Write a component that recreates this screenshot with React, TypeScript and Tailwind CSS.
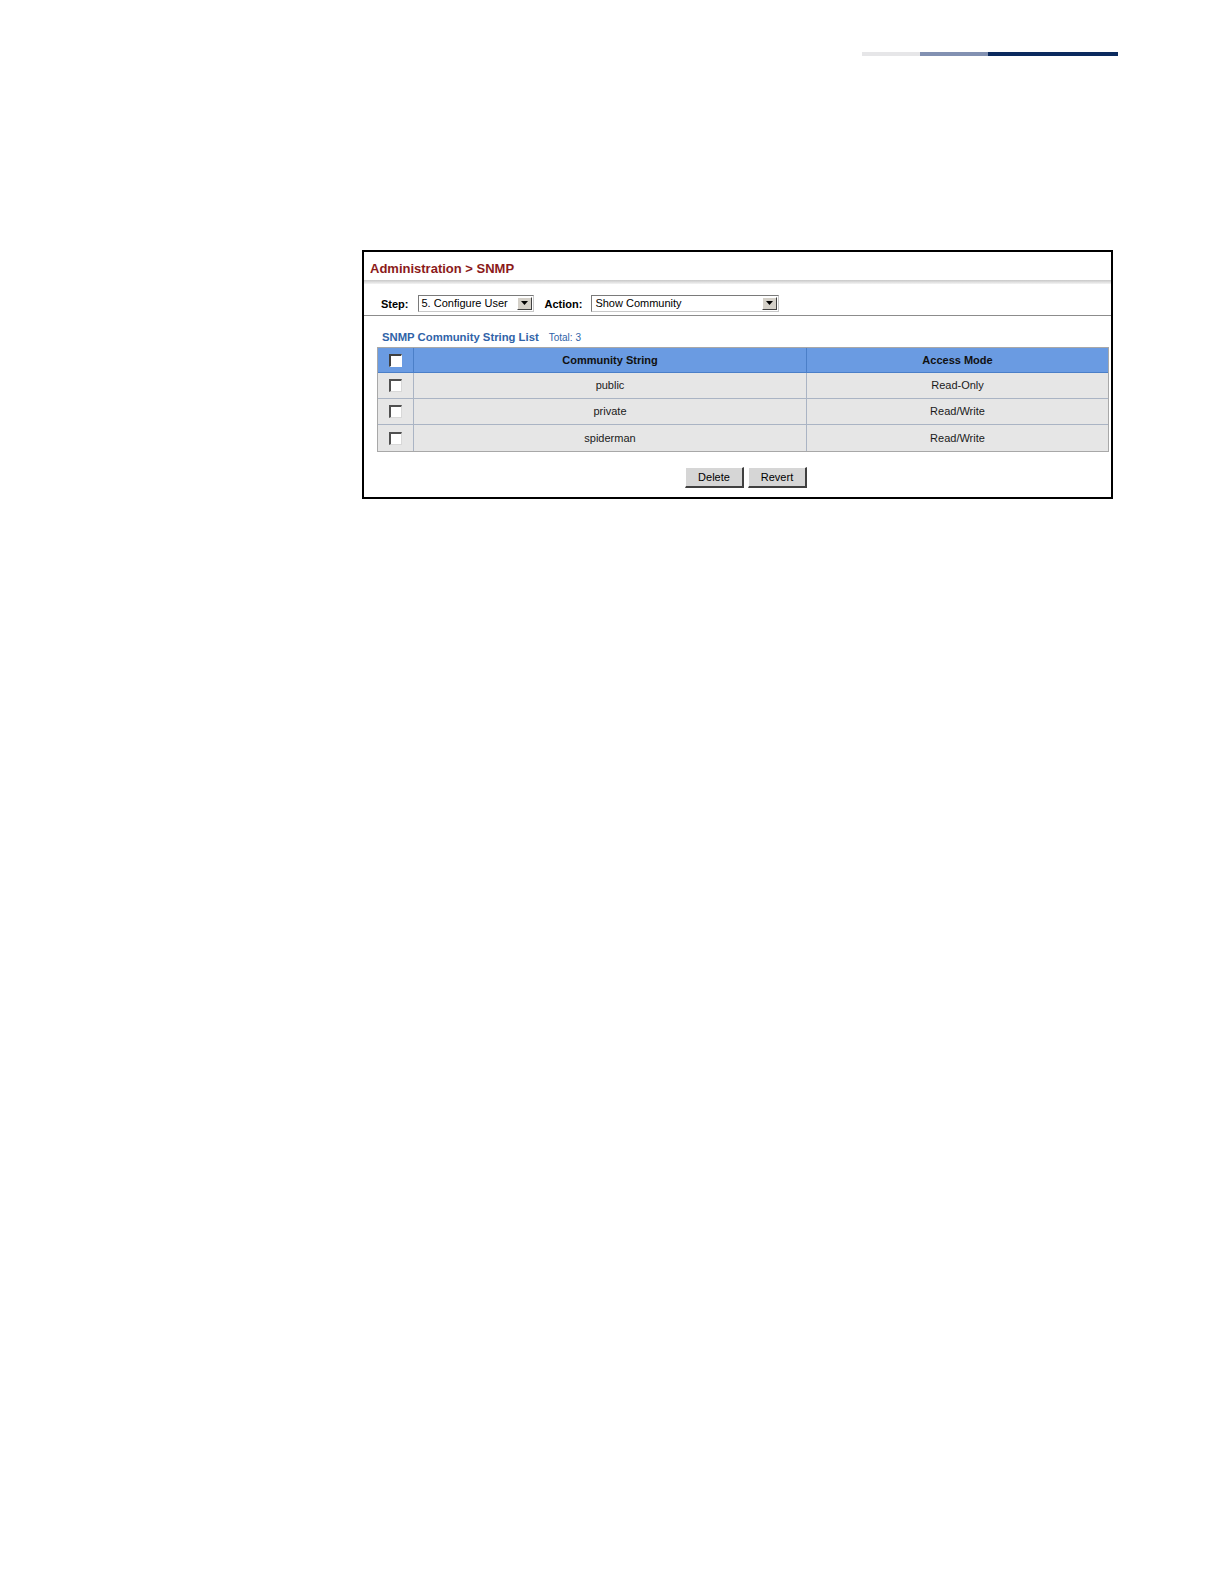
const SANS = "font-['Liberation_Sans',Arial,sans-serif]";

type Row = { name: string; mode: string };

const ROWS: Row[] = [
  { name: 'public', mode: 'Read-Only' },
  { name: 'private', mode: 'Read/Write' },
  { name: 'spiderman', mode: 'Read/Write' },
];

function Checkbox({ header = false }: { header?: boolean }) {
  return (
    <span
      className={
        'inline-block h-[13px] w-[13px] border-t-2 border-l-2 border-b border-r bg-white ' +
        (header
          ? 'border-t-[#404040] border-l-[#404040] border-b-white border-r-white'
          : 'border-t-[#505050] border-l-[#505050] border-b-[#d8d8d8] border-r-[#d8d8d8]')
      }
    />
  );
}

function Select({ value, width }: { value: string; width: string }) {
  return (
    <div
      className={`flex h-[17px] items-center border border-t-[#7a7a7a] border-l-[#7a7a7a] border-b-[#c8c8c8] border-r-[#c8c8c8] bg-white ${width}`}
    >
      <span className={`flex-1 truncate pl-[3px] text-[11px] leading-none text-black ${SANS}`}>
        {value}
      </span>
      <span className="mr-[1px] flex h-[13px] w-[15px] items-center justify-center border border-t-white border-l-white border-b-[#404040] border-r-[#404040] bg-[#d4d0c8]">
        <svg width="7" height="4" viewBox="0 0 7 4">
          <path d="M0 0h7L3.5 4z" fill="#000" />
        </svg>
      </span>
    </div>
  );
}

function Button({ label }: { label: string }) {
  return (
    <button
      type="button"
      className={`h-[21px] w-[59px] border border-t-white border-l-white border-b-2 border-r-2 border-b-[#404040] border-r-[#404040] bg-[#d6d6d6] text-[11px] text-black ${SANS}`}
    >
      {label}
    </button>
  );
}

export default function App() {
  return (
    <div className="relative h-[1584px] w-[1224px] bg-white">
      {/* page header rule */}
      <div className="flex pt-[52px] pl-[862px]">
        <div className="h-[4px] w-[58px] bg-[#e6e6e8]" />
        <div className="h-[4px] w-[68px] bg-[#8291b2]" />
        <div className="h-[4px] w-[130px] bg-[#0b2a5e]" />
      </div>

      <div className="ml-[362px] mt-[194px] h-[249px] w-[751px] border-2 border-black">
        <div className={`pl-[6px] pt-[9px] text-[13px] font-bold leading-[16px] text-[#8b1a1a] ${SANS}`}>
          Administration &gt; SNMP
        </div>
        <div className="mt-[3px] h-[4px] bg-gradient-to-b from-[#c8c8c8] to-[#f4f4f4]" />

        <div className="flex h-[32px] items-center border-b border-[#8c8c8c] pl-[17px] pt-[7px]">
          <span className={`pt-[3px] text-[11px] font-bold text-black ${SANS}`}>Step:</span>
          <div className="ml-[9px]">
            <Select value="5. Configure User" width="w-[116px]" />
          </div>
          <span className={`ml-[11px] pt-[3px] text-[11px] font-bold text-black ${SANS}`}>Action:</span>
          <div className="ml-[9px]">
            <Select value="Show Community" width="w-[188px]" />
          </div>
        </div>

        <div className="flex items-baseline gap-[10px] pl-[18px] pt-[14px] leading-[14px]">
          <span className={`text-[11.3px] font-bold text-[#3063a8] ${SANS}`}>SNMP Community String List</span>
          <span className={`text-[10px] text-[#3063a8] ${SANS}`}>Total: 3</span>
        </div>

        <div className="ml-[13px] mt-[2px] w-[732px] border border-[#a8a8a8]">
          <div className="flex h-[25px] border-b border-[#4b7fc8] bg-[#6a9be2]">
            <div className="flex w-[36px] items-center justify-center border-r border-[#4b7fc8]">
              <Checkbox header />
            </div>
            <div className={`flex w-[393px] items-center justify-center border-r border-[#4b7fc8] text-[11px] font-bold text-[#111] ${SANS}`}>
              Community String
            </div>
            <div className={`flex flex-1 items-center justify-center text-[11px] font-bold text-[#111] ${SANS}`}>
              Access Mode
            </div>
          </div>
          {ROWS.map((row, i) => (
            <div
              key={row.name}
              className={`flex h-[26px] bg-[#e6e6e6] ${i < ROWS.length - 1 ? 'border-b border-[#aab4c4]' : 'h-[25px]'}`}
            >
              <div className="flex w-[36px] items-center justify-center border-r border-[#aab4c4]">
                <Checkbox />
              </div>
              <div className={`flex w-[393px] items-center justify-center border-r border-[#aab4c4] text-[11px] text-[#1a1a1a] ${SANS}`}>
                {row.name}
              </div>
              <div className={`flex flex-1 items-center justify-center text-[11px] text-[#1a1a1a] ${SANS}`}>
                {row.mode}
              </div>
            </div>
          ))}
        </div>

        <div className="flex gap-[4px] pl-[321px] pt-[15px]">
          <Button label="Delete" />
          <Button label="Revert" />
        </div>
      </div>
    </div>
  );
}
